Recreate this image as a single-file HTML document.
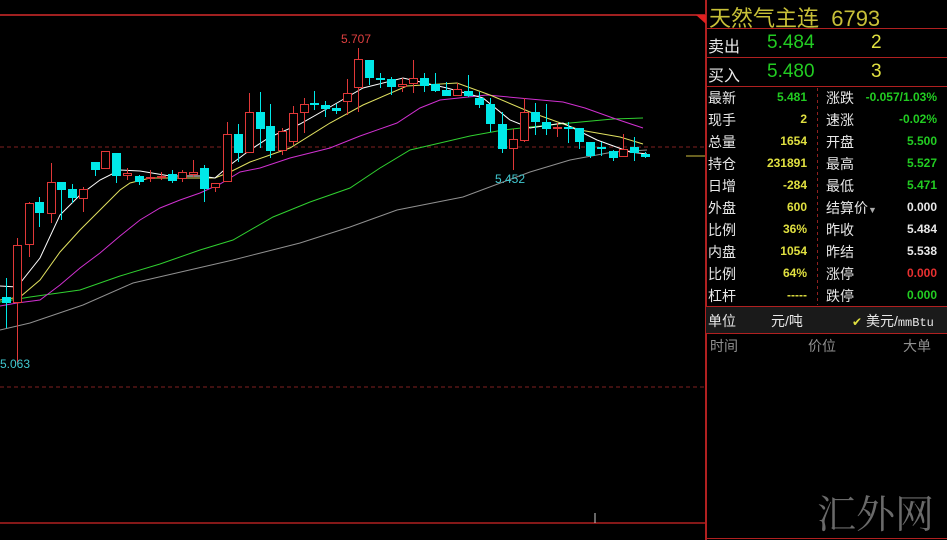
<!DOCTYPE html>
<html><head><meta charset="utf-8"><style>
body{margin:0;background:#000;width:947px;height:540px;overflow:hidden;position:relative;font-family:"Liberation Sans","Noto Sans CJK SC",sans-serif}
.p{position:absolute;white-space:nowrap}
.l{color:#e8e8e8;font-size:14px}
.v{font-size:12px;font-weight:bold;text-align:right}
.y{color:#e0e040}.g{color:#22cc22}.w{color:#e8e8e8}.r{color:#e83030}
</style></head><body>
<svg width="947" height="540" style="position:absolute;left:0;top:0">
<line x1="0" y1="15" x2="705" y2="15" stroke="#a02020" stroke-width="2"/>
<line x1="706" y1="0" x2="706" y2="540" stroke="#b02020" stroke-width="2"/>
<line x1="0" y1="523" x2="705" y2="523" stroke="#b02020" stroke-width="1.5"/>
<polygon points="696,15 706,15 706,24" fill="#e02020"/>
<line x1="0" y1="147" x2="705" y2="147" stroke="#802020" stroke-dasharray="4,3"/>
<line x1="0" y1="387" x2="705" y2="387" stroke="#802020" stroke-dasharray="4,3"/>
<line x1="595" y1="513" x2="595" y2="523" stroke="#ccc"/>
<line x1="686" y1="156" x2="705" y2="156" stroke="#d0c040"/>
<g fill="none" stroke-width="1">
<polyline stroke="#909090" points="0,330 30,323 83,305 133,283 233,260 300,243 350,227 397,210 463,197 530,172 570,160 613,152 647,150"/>
<polyline stroke="#30d030" points="0,302 30,297 80,290 120,276 160,264 200,250 233,240 273,217 310,202 350,188 380,168 410,150 440,143 470,136 503,130 530,127 570,123 613,119 643,118"/>
<polyline stroke="#d030d0" points="0,306 17,303 40,300 60,285 80,268 100,253 120,236 140,220 160,208 180,200 200,193 220,184 240,172 260,168 290,158 330,148 360,136 397,123 420,108 440,100 487,95 530,99 563,102 585,108 613,118 643,128"/>
<polyline stroke="#e0e060" points="0,300 20,297 40,280 60,252 80,230 100,210 120,190 130,183 150,178 190,178 215,178 230,172 250,162 270,155 290,148 330,123 363,105 407,86 457,83 490,95 530,112 580,130 620,137 643,144"/>
<polyline stroke="#ffffff" points="0,286 17,287 40,258 60,215 80,195 100,180 120,170 140,171 170,176 200,176 215,178 230,165 250,150 270,137 300,124 330,107 363,88 403,78 447,88 483,98 510,120 530,128 563,123 597,140 630,152 647,154"/>
</g>
<g id="c"></g>
</svg>
<script>
var d=[[6,'c',297,303,278,328],[17,'r',245,303,238,363],[29,'r',203,245,202,257],[39,'c',202,213,197,227],[51,'r',182,214,163,223],[61,'c',182,190,182,220],[72,'c',189,198,184,203],[83,'r',189,199,187,212],[95,'c',162,170,162,176],[105,'r',151,169,151,169],[116,'c',153,176,153,183],[127,'r',173,176,168,180],[139,'c',176,182,175,185],[150,'r',177,179,170,182],[161,'r',176,178,172,180],[172,'c',174,181,170,183],[182,'r',172,179,170,182],[193,'r',172,175,160,177],[204,'c',168,189,165,202],[215,'r',183,188,183,192],[227,'r',134,182,122,182],[238,'c',134,153,124,162],[249,'r',112,153,93,153],[260,'c',112,129,92,148],[270,'c',126,151,104,158],[282,'r',131,151,128,155],[293,'r',113,142,106,145],[304,'r',104,113,98,133],[314,'c',103,105,91,110],[325,'c',105,109,101,117],[336,'c',108,111,104,114],[347,'r',93,102,79,115],[358,'r',59,88,48,112],[369,'c',60,78,60,85],[380,'c',78,80,73,88],[391,'c',79,87,77,95],[402,'r',84,87,78,92],[413,'r',78,84,60,93],[424,'c',78,86,73,92],[435,'c',84,91,73,92],[446,'c',90,96,82,96],[457,'r',89,96,83,96],[468,'c',91,96,75,97],[479,'c',98,105,92,108],[490,'c',104,124,98,132],[502,'c',124,149,112,153],[513,'r',139,149,129,170],[524,'r',112,141,98,142],[535,'c',112,122,103,135],[546,'c',122,129,104,135],[557,'r',127,129,123,137],[568,'c',127,129,122,143],[579,'c',128,142,128,149],[590,'c',142,156,142,158],[601,'c',147,149,142,156],[613,'c',151,158,150,161],[623,'r',149,157,134,157],[634,'c',147,153,137,161],[645,'c',154,157,152,158]];
var s='';d.forEach(function(a){var x=a[0],col=a[1]=='c'?'#00e8e8':'#e03838';
s+='<line x1="'+(x+.5)+'" y1="'+a[4]+'" x2="'+(x+.5)+'" y2="'+a[5]+'" stroke="'+col+'"/>';
var h=Math.max(a[3]-a[2],1);
if(a[1]=='c')s+='<rect x="'+(x-4)+'" y="'+a[2]+'" width="9" height="'+h+'" fill="'+col+'"/>';
else s+='<rect x="'+(x-3.5)+'" y="'+(a[2]+.5)+'" width="8" height="'+(h-1>0?h-1:1)+'" fill="#000" stroke="'+col+'"/>';});
document.getElementById('c').innerHTML=s;
</script>
<div class="p" style="left:341px;top:32px;font-size:12px;color:#e04040">5.707</div>
<div class="p" style="left:495px;top:172px;font-size:12px;color:#40c8d0">5.452</div>
<div class="p" style="left:0px;top:357px;font-size:12px;color:#40c8d0">5.063</div>

<svg width="241" height="540" style="position:absolute;left:706px;top:0">
<line x1="0" y1="28.5" x2="241" y2="28.5" stroke="#b02020"/>
<line x1="0" y1="57.5" x2="241" y2="57.5" stroke="#b02020"/>
<line x1="0" y1="86.5" x2="241" y2="86.5" stroke="#b02020"/>
<rect x="0" y="307" width="241" height="26" fill="#1a1a1a"/>
<line x1="0" y1="306.5" x2="241" y2="306.5" stroke="#b02020"/>
<line x1="0" y1="333.5" x2="241" y2="333.5" stroke="#b02020"/>
<line x1="111.5" y1="88" x2="111.5" y2="305" stroke="#902020" stroke-dasharray="3,3"/>
<line x1="0" y1="538.5" x2="241" y2="538.5" stroke="#b02020"/>
</svg>
<div class="p" style="left:709px;top:1px;font-size:22px;color:#c8c038">天然气主连 &nbsp;6793</div>
<div class="p l" style="left:708px;top:33px;font-size:16px">卖出</div>
<div class="p g" style="left:767px;top:32px;font-size:19px">5.484</div>
<div class="p y" style="left:871px;top:32px;font-size:19px">2</div>
<div class="p l" style="left:708px;top:62px;font-size:16px">买入</div>
<div class="p g" style="left:767px;top:61px;font-size:19px">5.480</div>
<div class="p y" style="left:871px;top:61px;font-size:19px">3</div>
<div id="rows"></div>
<script>
var R=[['最新','5.481','g','涨跌','-0.057/1.03%','g'],['现手','2','y','速涨','-0.02%','g'],['总量','1654','y','开盘','5.500','g'],['持仓','231891','y','最高','5.527','g'],['日增','-284','y','最低','5.471','g'],['外盘','600','y','结算价<span style="font-size:9px;color:#aaa">▼</span>','0.000','w'],['比例','36%','y','昨收','5.484','w'],['内盘','1054','y','昨结','5.538','w'],['比例','64%','y','涨停','0.000','r'],['杠杆','-----','y','跌停','0.000','g']];
var h='';R.forEach(function(r,i){var t=88+i*22;
h+='<div class="p l" style="left:708px;top:'+t+'px">'+r[0]+'</div>';
h+='<div class="p v '+r[2]+'" style="right:140px;top:'+(t+2)+'px">'+r[1]+'</div>';
h+='<div class="p l" style="left:826px;top:'+t+'px">'+r[3]+'</div>';
h+='<div class="p v '+r[5]+'" style="right:10px;top:'+(t+2)+'px">'+r[4]+'</div>';});
document.getElementById('rows').innerHTML=h;
</script>
<div class="p l" style="left:708px;top:311px">单位</div>
<div class="p l" style="left:771px;top:311px">元/吨</div>
<div class="p l" style="left:852px;top:311px"><span style="color:#e0e040;font-size:12px">✔</span> 美元/<span style="font-family:'Liberation Mono',monospace;font-size:12px">mmBtu</span></div>
<div class="p" style="left:710px;top:336px;font-size:14px;color:#909090">时间</div>
<div class="p" style="left:808px;top:336px;font-size:14px;color:#909090">价位</div>
<div class="p" style="left:903px;top:336px;font-size:14px;color:#909090">大单</div>
<div class="p" style="left:817px;top:484px;font-size:39px;color:#6a6a6a;font-family:'Noto Serif CJK SC',serif">汇外网</div>
</body></html>
